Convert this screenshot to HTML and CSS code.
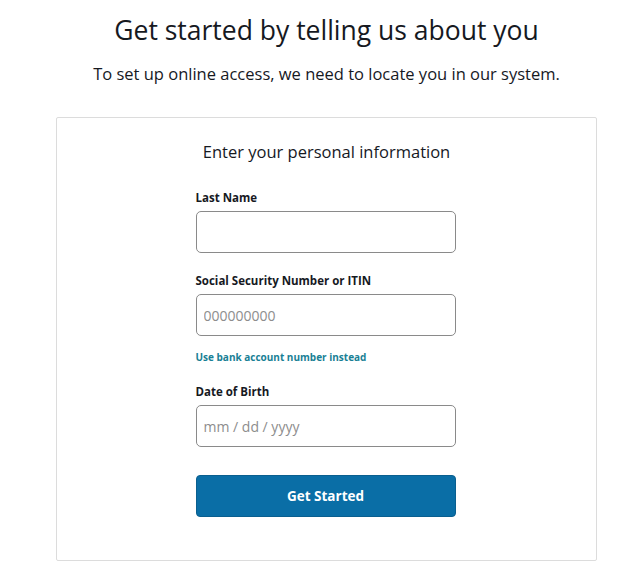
FILE: index.html
```html
<!DOCTYPE html>
<html lang="en">
<head>
<meta charset="utf-8">
<title>Get started</title>
<link rel="stylesheet" href="styles.css">
</head>
<body>
<main class="page">
  <h1 class="title">Get started by telling us about you</h1>
  <p class="subtitle">To set up online access, we need to locate you in our system.</p>
  <section class="card">
    <h2 class="card-title">Enter your personal information</h2>
    <form class="form">
      <div class="field">
        <label class="label" for="ln">Last Name</label>
        <input class="input" id="ln" type="text">
      </div>
      <div class="field">
        <label class="label" for="ssn">Social Security Number or ITIN</label>
        <input class="input" id="ssn" type="text" placeholder="000000000">
        <a class="link" href="#">Use bank account number instead</a>
      </div>
      <div class="field">
        <label class="label" for="dob">Date of Birth</label>
        <input class="input" id="dob" type="text" placeholder="mm / dd / yyyy">
      </div>
      <button class="button" type="button">Get Started</button>
    </form>
  </section>
</main>
</body>
</html>
```
FILE: styles.css
```css
* { box-sizing: border-box; }
body {
  margin: 0;
  background: #fff;
  font-family: "Open Sans", "Noto Sans", Arial, sans-serif;
  color: #16191f;
}
.page {
  width: 541px;
  margin-left: 56px;
  display: flex;
  flex-direction: column;
  align-items: center;
}
.title {
  margin: 12px 0 0;
  font-size: 26.5px;
  font-weight: 400;
  line-height: 36px;
  white-space: nowrap;
}
.subtitle {
  margin: 15px 0 0;
  font-size: 16.5px;
  line-height: 22px;
  white-space: nowrap;
}
.card {
  margin-top: 32px;
  width: 541px;
  height: 444px;
  border: 1px solid #dcdcdc;
  border-radius: 2px;
  display: flex;
  flex-direction: column;
  align-items: center;
}
.card-title {
  margin: 22px 0 0;
  font-size: 16.5px;
  font-weight: 400;
  line-height: 24px;
}
.form {
  width: 260px;
  margin-top: 26px;
  margin-left: -2px;
  display: flex;
  flex-direction: column;
}
.field {
  display: flex;
  flex-direction: column;
  margin-bottom: 20px;
}
.label {
  font-size: 11.5px;
  font-weight: 700;
  line-height: 16px;
  margin-bottom: 5px;
}
.input {
  height: 42px;
  border: 1px solid #8a8a8a;
  border-radius: 5px;
  padding: 0 7px;
  font-family: inherit;
  font-size: 14px;
  color: #16191f;
}
.input::placeholder { color: #8d8d8d; }
.link {
  margin-top: 14px;
  font-size: 10px;
  font-weight: 700;
  color: #197f95;
  text-decoration: none;
  line-height: 14px;
}
.button {
  margin-top: 8px;
  height: 42px;
  border: 1px solid #0a5f8f;
  border-radius: 4px;
  background: #0a6ea6;
  color: #fff;
  font-family: inherit;
  font-size: 13.5px;
  font-weight: 700;
}
```
